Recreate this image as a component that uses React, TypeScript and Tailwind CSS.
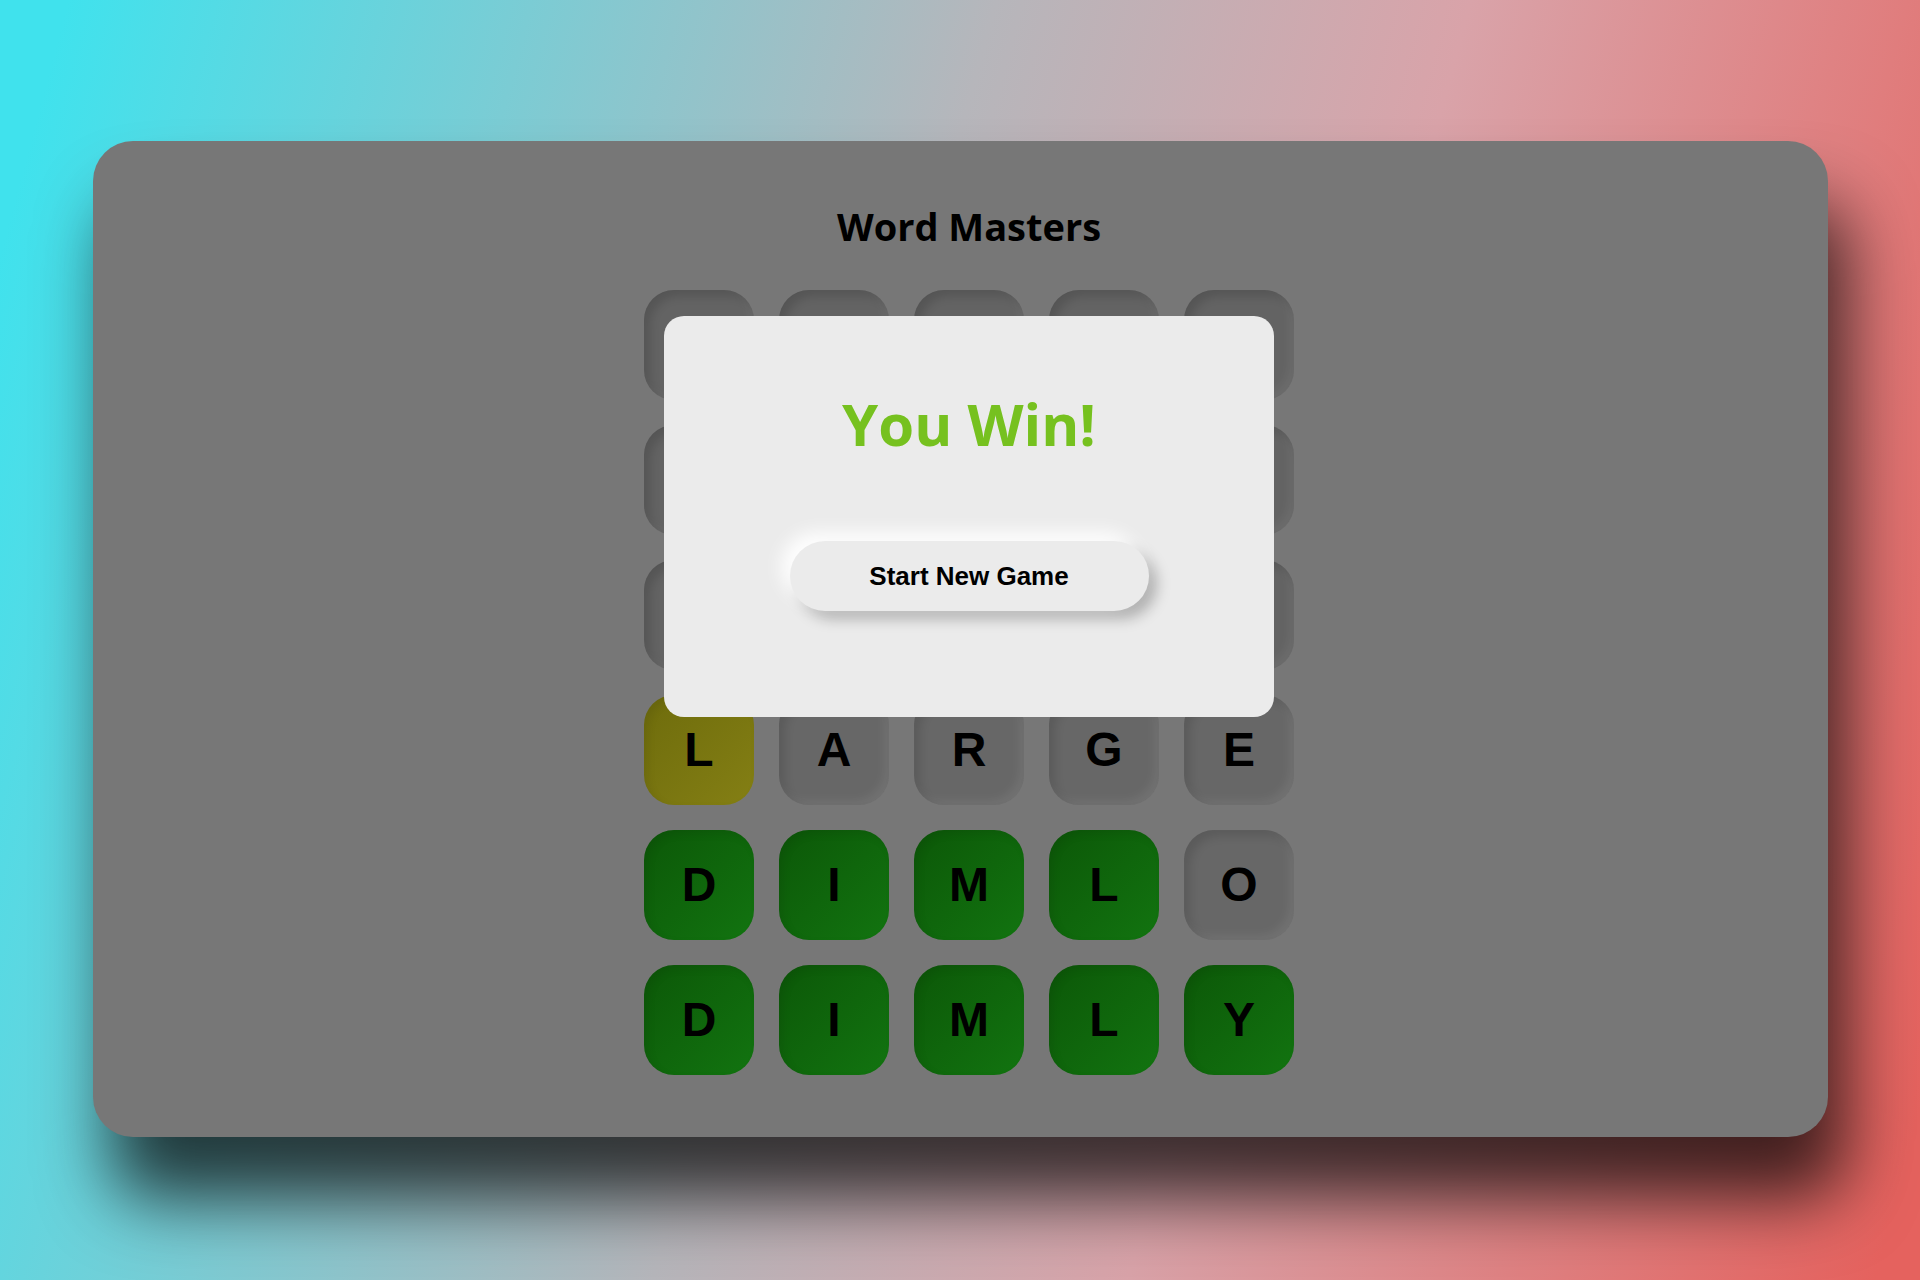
import React from "react";

type TileState = "empty" | "absent" | "present" | "correct";

interface Tile {
  letter: string;
  state: TileState;
}

const rowFrom = (word: string, states: TileState[]): Tile[] =>
  word.split("").map((letter, i) => ({ letter, state: states[i] }));

const emptyRow: Tile[] = Array.from({ length: 5 }, () => ({ letter: "", state: "empty" }));

const board: Tile[][] = [
  emptyRow,
  emptyRow,
  emptyRow,
  rowFrom("LARGE", ["present", "absent", "absent", "absent", "absent"]),
  rowFrom("DIMLO", ["correct", "correct", "correct", "correct", "absent"]),
  rowFrom("DIMLY", ["correct", "correct", "correct", "correct", "correct"]),
];

const tileClass: Record<TileState, string> = {
  empty:
    "bg-[#636363] shadow-[inset_6px_6px_10px_rgba(0,0,0,0.14),inset_-5px_-5px_10px_rgba(255,255,255,0.06)]",
  absent:
    "bg-[#676767] shadow-[inset_6px_6px_10px_rgba(0,0,0,0.12),inset_-5px_-5px_10px_rgba(255,255,255,0.07)]",
  present:
    "bg-gradient-to-br from-[#6e6c0c] to-[#847f14] shadow-[inset_4px_4px_8px_rgba(0,0,0,0.08)]",
  correct:
    "bg-gradient-to-br from-[#0c5808] to-[#127410] shadow-[inset_4px_4px_8px_rgba(0,0,0,0.08)]",
};

const LetterTile: React.FC<{ tile: Tile }> = ({ tile }) => (
  <div
    className={`flex h-[110px] w-[110px] items-center justify-center rounded-[30px] ${tileClass[tile.state]}`}
  >
    <span className="font-['Liberation_Sans',Arial,sans-serif] text-[48px] leading-none font-bold text-black">
      {tile.letter}
    </span>
  </div>
);

const WinModal: React.FC = () => (
  <div className="absolute top-[26px] left-1/2 flex h-[401px] w-[610px] -translate-x-1/2 flex-col items-center rounded-[20px] bg-[#ebebeb] pt-[79px]">
    <h2 className="font-['Open_Sans',sans-serif] text-[58px] leading-none font-bold text-[#76c11f]">
      You Win!
    </h2>
    <button className="mt-[88px] h-[70px] w-[359px] rounded-full bg-[#ebebeb] font-['Liberation_Sans',Arial,sans-serif] text-[26px] font-bold text-black shadow-[-9px_-9px_18px_rgba(255,255,255,0.95),8px_8px_14px_rgba(0,0,0,0.25)]">
      Start New Game
    </button>
  </div>
);

export default function App() {
  return (
    <div className="flex h-[1280px] w-full justify-center bg-[linear-gradient(105deg,#40e2ed_3%,#b6b6bb_44%,#d9a3a9_65%,#e5625e_98%)] pt-[141px]">
      <div className="flex h-[996px] w-[1735px] flex-col items-center rounded-[40px] bg-[#777777] pt-[66px] pl-[18px] shadow-[18px_62px_70px_rgba(0,0,0,0.72)]">
        <h1 className="font-['Open_Sans',sans-serif] text-[38px] leading-none font-bold text-black">
          Word Masters
        </h1>
        <div className="relative mt-[45px]">
          <div className="grid grid-cols-5 gap-[25px]">
            {board.map((row, r) =>
              row.map((tile, c) => <LetterTile key={`${r}-${c}`} tile={tile} />)
            )}
          </div>
          <WinModal />
        </div>
      </div>
    </div>
  );
}
